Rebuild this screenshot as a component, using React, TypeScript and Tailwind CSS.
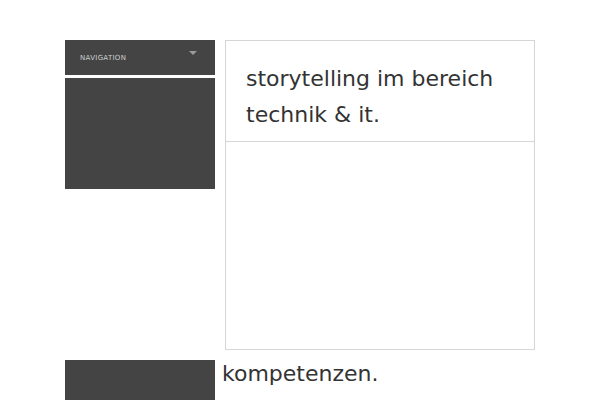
export default function App() {
  return (
    <div className="w-[600px] h-[400px] overflow-hidden bg-white pl-[65px] pt-[40px] font-['DejaVu_Sans',sans-serif]">
      <div className="flex gap-[10px]">
        {/* sidebar */}
        <div className="w-[150px] flex flex-col gap-[3px]">
          <div className="h-[35px] bg-[#444444] flex items-center justify-between pl-[15px] pr-[18px]">
            <span className="text-[7px] tracking-[0.3px] text-[#cfcfcf] leading-none mt-[1px]">NAVIGATION</span>
            <span className="w-0 h-0 border-l-[4px] border-r-[4px] border-t-[4px] border-l-transparent border-r-transparent border-t-[#9a9a9a] -mt-[10px]" />
          </div>
          <div className="h-[111px] bg-[#444444]" />
        </div>

        {/* main box */}
        <div className="w-[310px] h-[310px] border border-[#d6d6d6] flex flex-col">
          <div className="h-[101px] border-b border-[#d6d6d6] pl-[20px] pt-[20px]">
            <h1 className="text-[22px] leading-[36px] text-[#333333]">
              storytelling im bereich<br />technik &amp; it.
            </h1>
          </div>
        </div>
      </div>

      <div className="flex mt-[10px] gap-[7px]">
        <div className="w-[150px] h-[40px] bg-[#444444]" />
        <div className="text-[22px] leading-[28px] text-[#333333]">kompetenzen.</div>
      </div>
    </div>
  )
}
